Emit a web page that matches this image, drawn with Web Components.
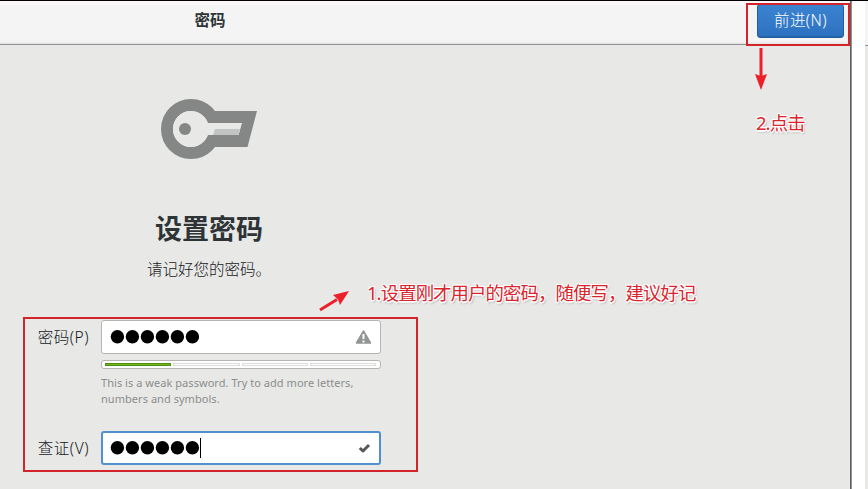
<!DOCTYPE html>
<html lang="zh-CN">
<head>
<meta charset="utf-8">
<title>设置密码</title>
<style>
html,body{margin:0;height:489px;overflow:hidden;background:#fff}
body{font-family:"Noto Sans","Noto Sans CJK SC",sans-serif;color:#2e3436}
</style>
</head>
<body>
<setup-window></setup-window>
<script>
const define = (name, html, init) => customElements.define(name, class extends HTMLElement {
  constructor() {
    super();
    this.attachShadow({mode: 'open'}).innerHTML = html;
  }
  connectedCallback() { if (init) init(this, this.shadowRoot); }
});

define('primary-button', `<style>
:host{display:block;box-sizing:border-box;width:87px;height:34px;border:1px solid #215d9c;border-radius:3px;background:linear-gradient(#3a83d0,#3379c8 60%,#2a70be);color:#fff;font-size:15.500px;font-weight:300;line-height:30px;text-align:center;letter-spacing:.4px;box-shadow:inset 0 -1px #2567ae}
</style><slot></slot>`);

define('header-bar', `<style>
:host{display:flex;box-sizing:border-box;height:45px;border-top:1px solid #000;border-bottom:1px solid #919191;background:linear-gradient(#fbf7f8 0 3px,#f4f4f4 5px 38px,#f2f2f2 41px,#dedede);padding:3px 6px 0 0}
.title{width:420px;text-align:center;font:700 15.500px/33px "Noto Sans","Noto Sans CJK SC",sans-serif}
.gap{flex:1}
</style><div class="title"><slot></slot></div><div class="gap"></div><slot name="action"></slot>`);

define('key-icon', `<style>:host{display:block;height:62px}svg{display:block}</style>
<svg width="98" height="62" viewBox="160 98 98 62">
<circle cx="191" cy="129" r="24" fill="none" stroke="#858786" stroke-width="12"/>
<path d="M208 111H257L247.500 147H208V135H238.500L242 123H208Z" fill="#858786"/>
<path d="M191 111a18 18 0 1 0 0 36a18 18 0 0 0 16.500-12V123a18 18 0 0 0-16.500-12z" fill="#e8e8e7"/>
<path d="M206 123H241.500L238.500 135H206z" fill="#e8e8e7"/>
<path d="M215 129H240L238.500 135H213z" fill="#c2c3c3"/>
<circle cx="185" cy="129" r="6" fill="#858786"/></svg>`);

define('password-field', `<style>
:host{display:flex;align-items:center;box-sizing:border-box;width:280px;height:34px;border:1px solid #b5b6b3;border-radius:3px;background:#fff;padding:0 8px}
:host([focused]){border:2px solid #5091cd;padding:0 7px}
svg{display:block}.dots{flex:none}.gap{flex:1}
.caret{width:1px;height:20px;background:#000;display:none}
:host([focused]) .caret{display:block}
</style><svg class="dots" width="90" height="14" viewBox="0 0 90 14"></svg><i class="caret"></i><span class="gap"></span><slot></slot>`,
(host, root) => {
  root.querySelector('.dots').innerHTML = Array.from({length: 6}, (_, i) =>
    `<circle cx="${7.4 + i * 15}" cy="6.700" r="6.700"/>`).join('');
});

define('warning-icon', `<style>:host{display:block}svg{display:block}</style>
<svg width="17" height="16" viewBox="0 0 17 16"><path d="M8.500 2L15.500 14H1.500z" fill="#929595" stroke="#929595" stroke-width="1.500" stroke-linejoin="round"/><path d="M8.500 5v5M8.500 11.500v2" stroke="#fff" stroke-width="2"/></svg>`);
define('check-icon', `<style>:host{display:block;margin-right:1px}svg{display:block}</style>
<svg width="13" height="12" viewBox="0 0 13 12"><path d="M1.800 6L5 9L11 3" fill="none" stroke="#555859" stroke-width="3" stroke-linejoin="round"/></svg>`);

define('strength-meter', `<style>
:host{display:flex;gap:2px;box-sizing:border-box;width:280px;height:9px;border:1px solid #b5b6b3;border-radius:3px;background:#fff;padding:2px 4px 2px 3px}
i{flex:1;box-sizing:border-box;height:3px;border:1px solid #dcdddb}
i.on{background:#73b515;border-color:#4e8e16}
</style><i class="on"></i><i></i><i></i><i></i>`);

define('field-row', `<style>
:host{display:flex;gap:12px;height:34px}
.label{width:89px;text-align:right;font-size:15.500px;font-weight:300;letter-spacing:.5px;line-height:34px;color:#151819}
</style><div class="label"><slot name="label"></slot></div><slot></slot>`);

define('setup-page', `<style>
:host{display:block;height:444px;background:#e8e8e7;box-sizing:border-box;padding-top:53px}
.intro{width:418px;display:flex;flex-direction:column;align-items:center}
h1{margin:47px 0 0;font:700 27px/44px "Noto Sans","Noto Sans CJK SC",sans-serif}
p{margin:7px 0 0;font-size:15.500px;font-weight:300;line-height:22px;color:#151819}
.form{margin-top:40px}
.details{margin:6px 0 0 101px}
.hint{margin:6px 0 24px;width:270px;height:32px;font-size:11px;line-height:16px;letter-spacing:.045px;color:#8a8e8c}
</style>
<div class="intro"><key-icon></key-icon><h1>设置密码</h1><p>请记好您的密码。</p></div>
<div class="form">
<field-row><span slot="label">密码(P)</span><password-field><warning-icon></warning-icon></password-field></field-row>
<div class="details"><strength-meter></strength-meter><div class="hint">This is a weak password. Try to add more letters,<br>numbers and symbols.</div></div>
<field-row><span slot="label">查证(V)</span><password-field focused><check-icon></check-icon></password-field></field-row>
</div>`);

define('callout-layer', `<style>
:host{position:absolute;inset:0;pointer-events:none}
svg{position:absolute;left:0;top:0}
.note{position:absolute;white-space:nowrap;color:#d9252e;font-size:18.400px;letter-spacing:-.9px;line-height:26px;text-shadow:-1px -1px #fff,1px -1px #fff,-1px 1px #fff,1px 1px #fff,0 2px 1px #fff,1px 2px 2px #888}
.one{left:367px;top:280px}.two{left:756px;top:110px}
</style>
<svg width="868" height="489" viewBox="0 0 868 489" fill="none" stroke="#d3232b" stroke-width="2">
<rect x="24" y="318" width="393" height="153"/><rect x="747" y="4" width="102" height="41"/>
<path d="M761 48V78M320 310L337 299.500" stroke="#ed2029" stroke-width="3"/>
<path d="M755 74L761 76L767 74L761 90ZM333 295L349 291L340 305L338 299.500Z" fill="#ed2029" stroke="none"/></svg>
<div class="note one">1.设置刚才用户的密码，随便写，建议好记</div>
<div class="note two">2.点击</div>`);

define('setup-window', `<style>
:host{display:grid;position:relative;grid-template-columns:850px 2px 13px 3px;width:868px;height:489px;overflow:hidden;background:#fff}
.edge{background:linear-gradient(90deg,#606060 50%,#929292 50%);border-top:1px solid #000}
.space{border-top:1px solid #000}
.next{border-top:1px solid #000;background:linear-gradient(#f4f4f4 44px,#919191 44px 45px,#e8e8e7 45px)}
</style>
<main><header-bar>密码<primary-button slot="action">前进(N)</primary-button></header-bar><setup-page></setup-page></main>
<div class="edge"></div><div class="space"></div><div class="next"></div><callout-layer></callout-layer>`);
</script>
</body>
</html>
